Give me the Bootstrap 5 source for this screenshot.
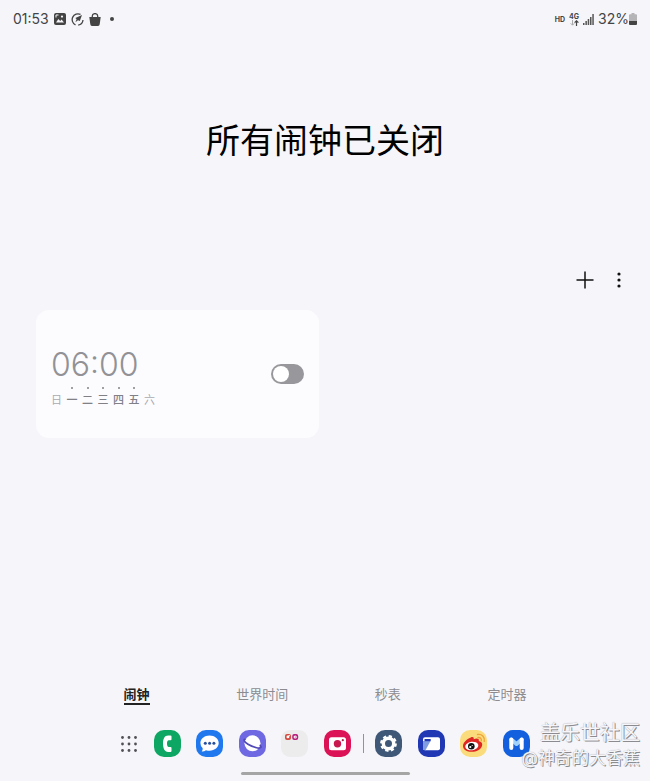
<!DOCTYPE html>
<html lang="zh-CN">
<head>
<meta charset="utf-8">
<meta name="viewport" content="width=device-width, initial-scale=1">
<title>闹钟</title>
<link href="https://cdn.jsdelivr.net/npm/bootstrap@5.3.0/dist/css/bootstrap.min.css" rel="stylesheet">
<style>
body{background:#f6f6fa;color:#111;font-family:Inter,"Noto Sans CJK SC",sans-serif;}
svg{display:block;flex:none;}
.status{height:38px;padding:0 13px;font-size:14px;line-height:20px;color:#444;}
.status-group{gap:5px;}
.more-dot{width:4px;height:4px;background:#444;margin-left:4px;}
.net{font-size:7px;line-height:7px;font-weight:700;}
.page-title{font-size:34px;line-height:44px;font-weight:400;padding:81px 0 105px;}
.tools{gap:10px;padding-right:19px;}
.tools .btn{color:#111;width:24px;height:24px;}
.alarms{padding:18px 36px 0;}
.alarm-grid{--bs-gutter-x:12px;}
.alarm{background:#fcfcff;border-radius:13px;min-height:128px;padding:0 15px;}
.alarm-time{font-size:32px;line-height:36px;font-weight:300;color:#929296;padding-top:6px;}
.days{width:104px;margin-top:4px;font-size:11px;line-height:14px;color:#aaaab0;}
.day{width:11px;}
.day::before{content:"";width:2px;height:2px;margin-bottom:4px;border-radius:50%;}
.day.on{color:#808086;font-weight:500;}
.day.on::before{background:#808086;}
.switch{appearance:none;width:33px;height:20px;border-radius:10px;background:#98989c;padding:2px;margin:0;display:flex;cursor:pointer;}
.switch::before{content:"";width:16px;height:16px;border-radius:50%;background:#fff;}
.switch:checked{background:#3e6fe0;justify-content:flex-end;}
.tabs{width:62%;gap:12px;font-size:13px;line-height:18px;}
.tabs a{color:#8c8c90;text-decoration:none;border-bottom:2px solid transparent;}
.tabs a.active{color:#222;font-weight:700;border-color:#222;}
.dock{width:63%;padding:25px 0 15px;}
.split{width:1px;height:19px;background:#929297;margin:0 -4px;}
.home-bar{width:26%;height:3px;border-radius:2px;background:#a5a5a6;margin-bottom:6px;}
.stamp{position:absolute;right:10px;bottom:11px;text-align:right;color:#f6f6fa;text-shadow:1px 1px 0 #8c8c90,0 0 1px #909096;pointer-events:none;}
.stamp-top{font-size:20px;line-height:26px;}
.stamp-name{font-size:17px;line-height:24px;}
</style>
<script src="https://cdn.jsdelivr.net/npm/bootstrap@5.3.0/dist/js/bootstrap.bundle.min.js" defer></script>
</head>
<body>
<div class="d-flex flex-column min-vh-100 position-relative">
  <header class="status d-flex justify-content-between align-items-center">
    <div class="status-group d-flex align-items-center">
      <span>01:53</span>
      <svg width="12" height="12" viewBox="0 0 12 12"><rect width="12" height="12" rx="2" fill="#444"/><path d="M2 9.5 4.4 6l1.8 2 1.4-1.6L10 9.5z" fill="#f6f6fa"/><circle cx="8" cy="3.6" r="1.1" fill="#f6f6fa"/><path d="M2 4.5V2h2.5" stroke="#f6f6fa" fill="none"/></svg>
      <svg width="13" height="13" viewBox="0 0 13 13" fill="none" stroke="#444" stroke-width="1.3"><path d="M9.5 1.4A5.7 5.7 0 1 0 4.5 11.900"/><path d="M7.2 12.1A5.7 5.7 0 0 0 12 7" /><path d="M11 2 8.8 8 7 7.2 4.4 9.2 5.6 6.2 4.4 5z" fill="#444" stroke="none"/></svg>
      <svg width="12" height="13" viewBox="0 0 12 13"><path d="M3.3 5V3a2.7 2.4 0 0 1 5.4 0v2" fill="none" stroke="#444" stroke-width="1.3"/><path d="M.3 4h11.4l-1 7.3Q10.500 13 9 13H3Q1.500 13 1.300 11.300z" fill="#444"/></svg>
      <span class="more-dot rounded-circle"></span>
    </div>
    <div class="d-flex align-items-center gap-1">
      <span class="net">HD</span>
      <span class="net d-flex flex-column align-items-center">4G
        <svg width="9" height="6" viewBox="0 0 9 6" fill="none"><path d="M2.500 0v5M.7 3.300 2.500 5.200l1.800-1.900" stroke="#aaa"/><path d="M6.500 6V1M4.600 2.700l1.900-1.900 1.900 1.900" stroke="#444" stroke-width="1.200"/></svg>
      </span>
      <svg width="11" height="11" viewBox="0 0 11 11" fill="#555"><path d="M0 9h1.500v2H0zM2.400 7h1.500v4H2.400zM4.700 5h1.500v6H4.700zM7 3h1.500v8H7zM9.300 0h1.500v11H9.300z"/></svg>
      <span class="d-flex align-items-center">32%
        <svg width="8" height="12" viewBox="0 0 8 12"><path d="M2.500 0h3v1.200H7q1 0 1 1V8H0V2.200q0-1 1-1h1.500z" fill="#b5b5b8"/><path d="M0 8h8v3q0 1-1 1H1q-1 0-1-1z" fill="#444"/></svg>
      </span>
    </div>
  </header>

  <main class="flex-grow-1">
    <h1 class="page-title text-center m-0 text-black">所有闹钟已关闭</h1>
    <div class="tools d-flex justify-content-end">
      <button class="btn p-0 border-0" type="button" aria-label="添加闹钟"><svg width="24" height="24" viewBox="0 0 24 24"><path d="M12 3.500v17M3.500 12h17" stroke="currentColor" stroke-width="1.500"/></svg></button>
      <button class="btn p-0 border-0" type="button" aria-label="更多选项"><svg width="24" height="24" viewBox="0 0 24 24" fill="currentColor"><circle cx="12" cy="6" r="1.600"/><circle cx="12" cy="12" r="1.600"/><circle cx="12" cy="18" r="1.600"/></svg></button>
    </div>
    <section class="alarms">
      <div class="row row-cols-2 alarm-grid">
        <div class="col">
          <div class="alarm d-flex justify-content-between align-items-center">
            <label for="alarm-1">
              <span class="alarm-time d-block">06:00</span>
              <span class="days d-flex justify-content-between">
                <span class="day d-flex flex-column align-items-center">日</span>
                <span class="day on d-flex flex-column align-items-center">一</span>
                <span class="day on d-flex flex-column align-items-center">二</span>
                <span class="day on d-flex flex-column align-items-center">三</span>
                <span class="day on d-flex flex-column align-items-center">四</span>
                <span class="day on d-flex flex-column align-items-center">五</span>
                <span class="day d-flex flex-column align-items-center">六</span>
              </span>
            </label>
            <input class="switch" type="checkbox" role="switch" id="alarm-1">
          </div>
        </div>
      </div>
    </section>
  </main>

  <nav class="tabs d-flex justify-content-between mx-auto">
    <a class="active" href="#alarm" aria-current="page">闹钟</a>
    <a href="#world">世界时间</a>
    <a href="#stopwatch">秒表</a>
    <a href="#timer">定时器</a>
  </nav>

  <footer class="dock d-flex justify-content-between align-items-center mx-auto">
    <button class="btn p-0 border-0" type="button" aria-label="所有应用"><svg width="18" height="18" viewBox="0 0 18 18" fill="#505055"><circle cx="2.500" cy="2.500" r="1.400"/><circle cx="9" cy="2.500" r="1.400"/><circle cx="15.500" cy="2.500" r="1.400"/><circle cx="2.500" cy="9" r="1.400"/><circle cx="9" cy="9" r="1.400"/><circle cx="15.500" cy="9" r="1.400"/><circle cx="2.500" cy="15.500" r="1.400"/><circle cx="9" cy="15.500" r="1.400"/><circle cx="15.500" cy="15.500" r="1.400"/></svg></button>
    <button class="btn p-0 border-0" type="button" aria-label="电话"><svg width="27" height="27" viewBox="0 0 27 27"><rect width="27" height="27" rx="10" fill="#0da663"/><path d="M16.500 5.500h-2.300C10.500 5.500 9 9 9 13.500s1.500 8.500 5.200 8.500h2.300q1 0 1-1v-3q0-1-1-1h-1.700c-1.300 0-1.800-1.500-1.800-3.400s.5-3.300 1.800-3.300h1.700q1 0 1-1V6.500q0-1-1-1z" fill="#fff"/></svg></button>
    <button class="btn p-0 border-0" type="button" aria-label="信息"><svg width="27" height="27" viewBox="0 0 27 27"><rect width="27" height="27" rx="10" fill="#2078ee"/><path d="M13.500 5.500c5.200 0 9.200 3.200 9.200 7.600s-4 7.600-9.200 7.600q-1.800 0-3.500-.5-2 1.600-4.300 1.400 1.200-1.500 1-3.300-2.300-2-2.300-5.200c0-4.400 4-7.600 9.100-7.600z" fill="#fff"/><g fill="#234f9c"><circle cx="9.300" cy="13.200" r="1.500"/><circle cx="13.600" cy="13.200" r="1.500"/><circle cx="17.900" cy="13.200" r="1.500"/></g></svg></button>
    <button class="btn p-0 border-0" type="button" aria-label="浏览器"><svg width="27" height="27" viewBox="0 0 27 27"><rect width="27" height="27" rx="10" fill="#6e69e2"/><circle cx="13.500" cy="13.300" r="8" fill="#fff"/><path d="M5.800 9.300C4 9.800 5.500 12 9 14.200c4.700 2.900 11.500 4.800 12.800 3.300.5-.6.2-1.200-.5-2" fill="none" stroke="#5149b8" stroke-width="1.700" stroke-linecap="round"/></svg></button>
    <button class="btn p-0 border-0" type="button" aria-label="文件夹"><svg width="27" height="27" viewBox="0 0 27 27"><rect width="27" height="27" rx="9" fill="#ececed"/><rect x="4" y="4" width="6" height="6" rx="2" fill="#d54d42"/><circle cx="6.900" cy="6.900" r="1.400" fill="#fff"/><path d="M7.500 5.700h1.500" stroke="#fff"/><rect x="11.200" y="4" width="6" height="6" rx="2" fill="#b7217c"/><circle cx="14.200" cy="7" r="1.600" fill="#fff"/><circle cx="14.200" cy="7" r=".6" fill="#b7217c"/></svg></button>
    <button class="btn p-0 border-0" type="button" aria-label="相机"><svg width="27" height="27" viewBox="0 0 27 27"><rect width="27" height="27" rx="10" fill="#dc1256"/><rect x="5" y="7.200" width="17" height="13" rx="2.500" fill="#fff"/><circle cx="13.500" cy="13.800" r="3.700" fill="#c91850"/><circle cx="18.800" cy="10.200" r="1.100" fill="#a52045"/></svg></button>
    <span class="split"></span>
    <button class="btn p-0 border-0" type="button" aria-label="设置"><svg width="27" height="27" viewBox="0 0 27 27"><rect width="27" height="27" rx="10" fill="#405878"/><circle cx="13.500" cy="13.500" r="5.200" fill="none" stroke="#fff" stroke-width="3.400"/><circle cx="13.500" cy="13.500" r="7.300" fill="none" stroke="#fff" stroke-width="2.200" stroke-dasharray="3.200 2.533"/></svg></button>
    <button class="btn p-0 border-0" type="button" aria-label="三星应用"><svg width="27" height="27" viewBox="0 0 27 27"><rect width="27" height="27" rx="10" fill="#2138b5"/><rect x="5" y="7.300" width="17" height="13" rx="2" fill="#fff"/><path d="M5 11h7.500L7.500 20.300H7q-2 0-2-2z" fill="#7f9de0"/><path d="M6.500 9h6.200v2.200H6.500z" fill="#2138b5"/></svg></button>
    <button class="btn p-0 border-0" type="button" aria-label="微博"><svg width="27" height="27" viewBox="0 0 27 27"><rect width="27" height="27" rx="10" fill="#fbdc7c"/><path d="M10.800 7.500c2-.9 3.300-.2 2.900 1.800 3.200-1.300 5.800-.9 5.100 1.800 2.800.7 4 2.400 3.200 4.800-1.200 3.600-5.500 5.900-10.200 5.900-5 0-8.800-2.300-8.800-5.900 0-3 3.500-6.800 7.800-8.400z" fill="#de2622"/><ellipse cx="11.800" cy="16" rx="6.600" ry="4.300" transform="rotate(-8 11.800 16)" fill="#fff"/><circle cx="11.300" cy="16.300" r="3.300" fill="#111"/><circle cx="10.300" cy="17" r="1.100" fill="#fff"/><circle cx="12.200" cy="15.500" r=".6" fill="#fff"/><path d="M17.500 4.500c4.500-.7 7.500 2.500 6.700 6.800M18 7.500c2.300-.3 3.700 1.200 3.300 3.300" fill="none" stroke="#eda33b" stroke-width="1.400" stroke-linecap="round"/></svg></button>
    <button class="btn p-0 border-0" type="button" aria-label="会员"><svg width="27" height="27" viewBox="0 0 27 27"><rect width="27" height="27" rx="10" fill="#1260dd"/><path d="m8.300 9.500 5.200 4.500 5.200-4.500" fill="none" stroke="#9ed2fa" stroke-width="4" stroke-linecap="round" stroke-linejoin="round"/><path d="M8.300 18V9.500M18.700 18V9.500" fill="none" stroke="#fff" stroke-width="4" stroke-linecap="round"/></svg></button>
  </footer>
  <div class="home-bar mx-auto"></div>

  <div class="stamp">
    <div class="stamp-top">盖乐世社区</div>
    <div class="stamp-name">@神奇的大香蕉</div>
  </div>
</div>
</body>
</html>
